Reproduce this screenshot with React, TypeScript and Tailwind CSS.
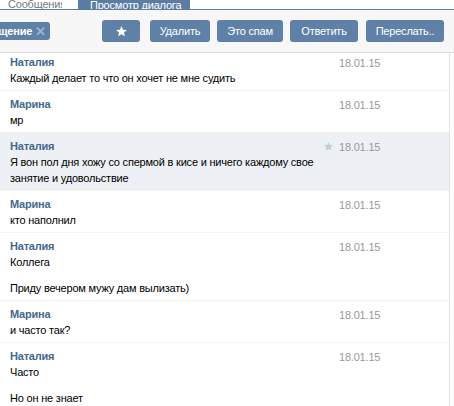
import React from "react";

type Msg = {
  name: string;
  lines: string[][];
  date?: string;
  active?: boolean;
};

const msgs: Msg[] = [
  { name: "Наталия", lines: [["Каждый делает то что он хочет не мне судить"]], date: "18.01.15" },
  { name: "Марина", lines: [["мр"]], date: "18.01.15" },
  {
    name: "Наталия",
    lines: [["Я вон пол дня хожу со спермой в кисе и ничего каждому свое", "занятие и удовольствие"]],
    date: "18.01.15",
    active: true,
  },
  { name: "Марина", lines: [["кто наполнил"]], date: "18.01.15" },
  { name: "Наталия", lines: [["Коллега"], ["Приду вечером мужу дам вылизать)"]], date: "18.01.15" },
  { name: "Марина", lines: [["и часто так?"]], date: "18.01.15" },
  { name: "Наталия", lines: [["Часто"], ["Но он не знает"]], date: "18.01.15" },
];

function Star({ className }: { className?: string }) {
  return (
    <svg viewBox="0 0 24 24" className={className} fill="currentColor">
      <path d="M12 2l2.9 6.6 7.1.6-5.4 4.7 1.6 7-6.2-3.7-6.2 3.7 1.6-7L2 9.2l7.1-.6z" />
    </svg>
  );
}

function Btn({ children, w }: { children: React.ReactNode; w: string }) {
  return (
    <div
      className={`${w} h-[22px] rounded-[3px] bg-[#5f81a8] text-white text-[11px] flex items-center justify-center`}
    >
      {children}
    </div>
  );
}

export default function App() {
  return (
    <div
      className="w-[454px] h-[406px] overflow-hidden bg-white text-[11px] text-black tracking-[-0.2px]"
      style={{ fontFamily: '"Liberation Sans", Arial, sans-serif' }}
    >
      {/* tabs strip, cut off at the top */}
      <div className="h-[10px] flex items-end border-b border-[#5b7ca3] bg-white">
        <div className="w-[62px] h-[10px] overflow-hidden flex items-end text-[#777] leading-[12px] pl-2 -mb-[1px]">
          Сообщения
        </div>
        <div className="ml-[16px] w-[112px] h-[10px] bg-[#5b7ca3] overflow-hidden text-white leading-[12px] pl-3">
          Просмотр диалога
        </div>
      </div>

      {/* toolbar */}
      <div className="h-[43px] bg-[#f7f7f7] border-b border-[#dcdcdc] flex items-center">
        <div className="w-[50px] h-[18px] rounded-r-[3px] bg-[#5f81a8] text-white font-bold flex items-center justify-end pr-1 gap-[3px]">
          <span>щение</span>
          <span className="text-[#9fb3cb] text-[13px] leading-none">✕</span>
        </div>
        <div className="ml-[52px] flex gap-[7px]">
          <Btn w="w-[38px]">
            <Star className="w-[13px] h-[13px]" />
          </Btn>
          <div className="ml-[3px]">
            <Btn w="w-[60px]">Удалить</Btn>
          </div>
          <Btn w="w-[66px]">Это спам</Btn>
          <Btn w="w-[68px]">Ответить</Btn>
          <div className="ml-[1px]">
            <Btn w="w-[78px]">Переслать..</Btn>
          </div>
        </div>
      </div>

      {/* messages */}
      <div className="w-[450px] border-r border-[#dde3ea]">
        {msgs.map((m, i) => (
          <div
            key={i}
            className={`flex border-b border-[#f3f3f0] ${m.active ? "bg-[#edf1f5]" : ""} ${
              i === 0 ? "pt-[1px]" : "pt-[5px]"
            } pb-[4px]`}
          >
            <div className="w-[318px] pl-[10px] leading-[16px] whitespace-nowrap">
              <div className="font-bold text-[#45688e]">{m.name}</div>
              {m.lines.map((p, j) => (
                <div key={j} className={j > 0 ? "mt-[10px]" : ""}>
                  {p.map((l, k) => (
                    <div key={k}>{l}</div>
                  ))}
                </div>
              ))}
            </div>
            <div className="flex items-start leading-[16px] pt-[1px]">
              <div className="w-[21px] flex justify-center">
                {m.active && <Star className="w-[11px] h-[11px] mt-[2px] text-[#c3ccd7]" />}
              </div>
              <span className="text-[#999]">{m.date}</span>
            </div>
          </div>
        ))}
      </div>
    </div>
  );
}
